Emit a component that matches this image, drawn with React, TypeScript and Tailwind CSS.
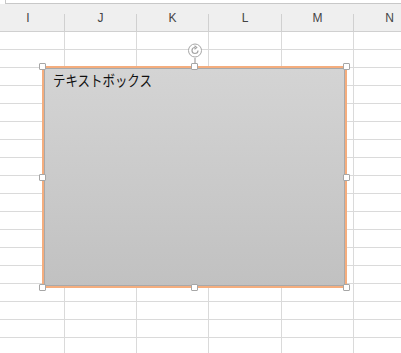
import React from 'react';

const cols = [
  { label: 'I', w: 'w-[73px]' },
  { label: 'J', w: 'w-[72px]' },
  { label: 'K', w: 'w-[72px]' },
  { label: 'L', w: 'w-[73px]' },
  { label: 'M', w: 'w-[72px]' },
  { label: 'N', w: 'w-[72px]' },
];

const rows = Array.from({ length: 18 });

// white selection handle
function Handle() {
  return <div className="w-[7px] h-[7px] bg-white border border-[#a6a6a6] rounded-[1px]" />;
}

export default function App() {
  return (
    <div
      className="relative w-[401px] h-[353px] overflow-hidden bg-white"
      style={{ fontFamily: '"Liberation Sans", "Noto Sans CJK JP", sans-serif' }}
    >
      {/* formula bar edge */}
      <div className="h-[4px] flex">
        <div className="w-[5px]" />
        <div className="flex-1 border-l border-b border-[#c8c8c8] bg-white" />
      </div>

      {/* column headers */}
      <div className="flex ml-[-8px] h-[28px] bg-[#efefef] border-b border-[#d0d0d0]">
        {cols.map(c => (
          <div key={c.label} className={`${c.w} shrink-0 flex`}>
            <div className="flex-1 flex items-end justify-center pb-[4px] text-[12px] text-[#444]">
              {c.label}
            </div>
            <div className="w-px mt-[10px] bg-[#d0d0d0]" />
          </div>
        ))}
      </div>

      {/* cells */}
      <div className="flex flex-col ml-[-8px]">
        {rows.map((_, r) => (
          <div key={r} className="flex h-[18px] border-b border-[#dadada]">
            {cols.map(c => (
              <div key={c.label} className={`${c.w} shrink-0 border-r border-[#dadada]`} />
            ))}
          </div>
        ))}
      </div>

      {/* text box shape, floating over the sheet */}
      <div className="absolute left-[42px] top-[66px] w-[305px] h-[222px]">
        <div className="w-full h-full border-2 border-[#f4ad7e]">
          <div className="w-full h-full border border-[#a9a9a9] bg-gradient-to-b from-[#d4d4d4] to-[#c1c1c1] pl-[8px] pt-[3px] text-[15px] text-[#111] leading-[18px]">
            <span className="inline-block origin-left scale-x-[0.83] whitespace-nowrap">テキストボックス</span>
          </div>
        </div>

        {/* rotation handle */}
        <div className="absolute left-1/2 -translate-x-1/2 bottom-full flex flex-col items-center">
          <svg width="15" height="15" viewBox="0 0 15 15">
            <circle cx="7.5" cy="7.5" r="6.5" fill="white" stroke="#a6a6a6" strokeWidth="1" />
            <path d="M10.5 7.5 A3 3 0 1 1 7.5 4.5" fill="none" stroke="#a6a6a6" strokeWidth="1.2" />
            <path d="M7 2.8 L9.2 4.5 L7 6.2" fill="none" stroke="#a6a6a6" strokeWidth="1.2" />
          </svg>
          <div className="w-px h-[8px] bg-[#8f8f8f]" />
        </div>

        {/* sizing handles */}
        <div className="absolute inset-[-3px] flex flex-col justify-between">
          <div className="flex justify-between">
            <Handle />
            <Handle />
            <Handle />
          </div>
          <div className="flex justify-between">
            <Handle />
            <Handle />
          </div>
          <div className="flex justify-between">
            <Handle />
            <Handle />
            <Handle />
          </div>
        </div>
      </div>
    </div>
  );
}
